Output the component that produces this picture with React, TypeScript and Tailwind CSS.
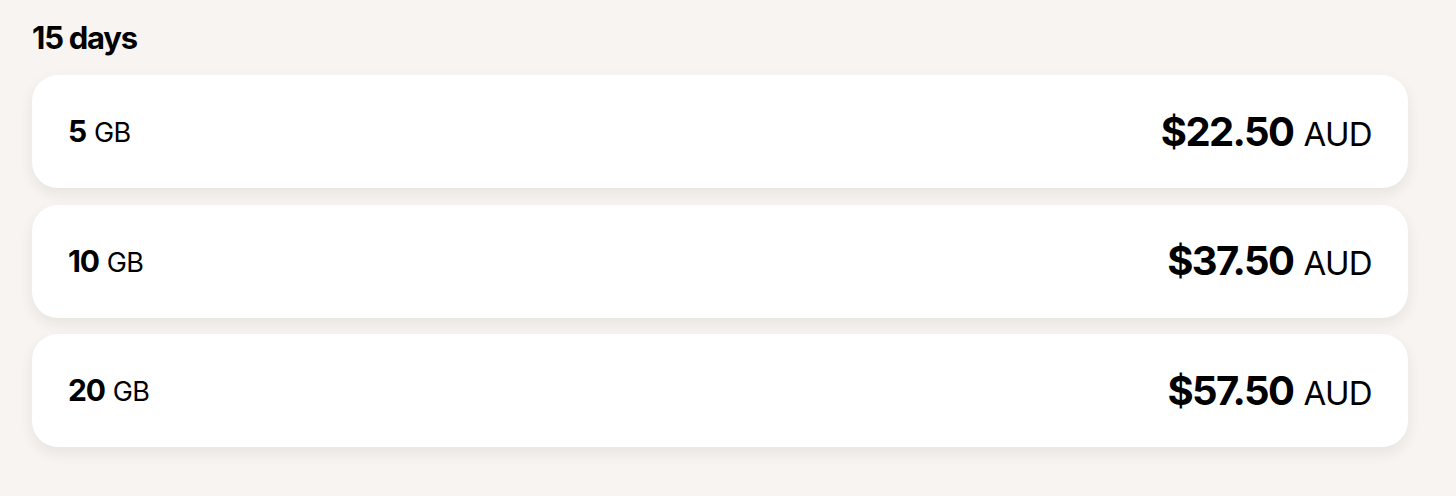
const plans = [
  { gb: '5', price: '$22.50' },
  { gb: '10', price: '$37.50' },
  { gb: '20', price: '$57.50' },
]

const App = () => {
  return (
    <div
      className="min-h-[496px] w-full bg-[#f7f4f1] pl-8 pr-12 pt-[18px] text-black"
      style={{ fontFamily: 'Inter, "Noto Sans", sans-serif' }}
    >
      <h2 className="text-[31px] font-bold leading-[40px] tracking-[-0.04em]">15 days</h2>
      <div className="mt-[17px] flex flex-col gap-[16.5px]">
        {plans.map((plan) => (
          <div
            key={plan.gb}
            className="flex h-[113px] items-center justify-between rounded-[26px] bg-white px-9 shadow-[0_6px_14px_rgba(60,40,30,0.08)]"
          >
            <div className="flex items-baseline gap-2">
              <span className="text-[30px] font-bold tracking-[-0.04em]">{plan.gb}</span>
              <span className="text-[27px] font-normal tracking-[-0.02em]">GB</span>
            </div>
            <div className="flex items-baseline gap-[10px]">
              <span className="text-[40px] font-bold tracking-[-0.04em]">{plan.price}</span>
              <span className="text-[33px] font-normal tracking-[-0.02em]">AUD</span>
            </div>
          </div>
        ))}
      </div>
    </div>
  )
}

export default App
